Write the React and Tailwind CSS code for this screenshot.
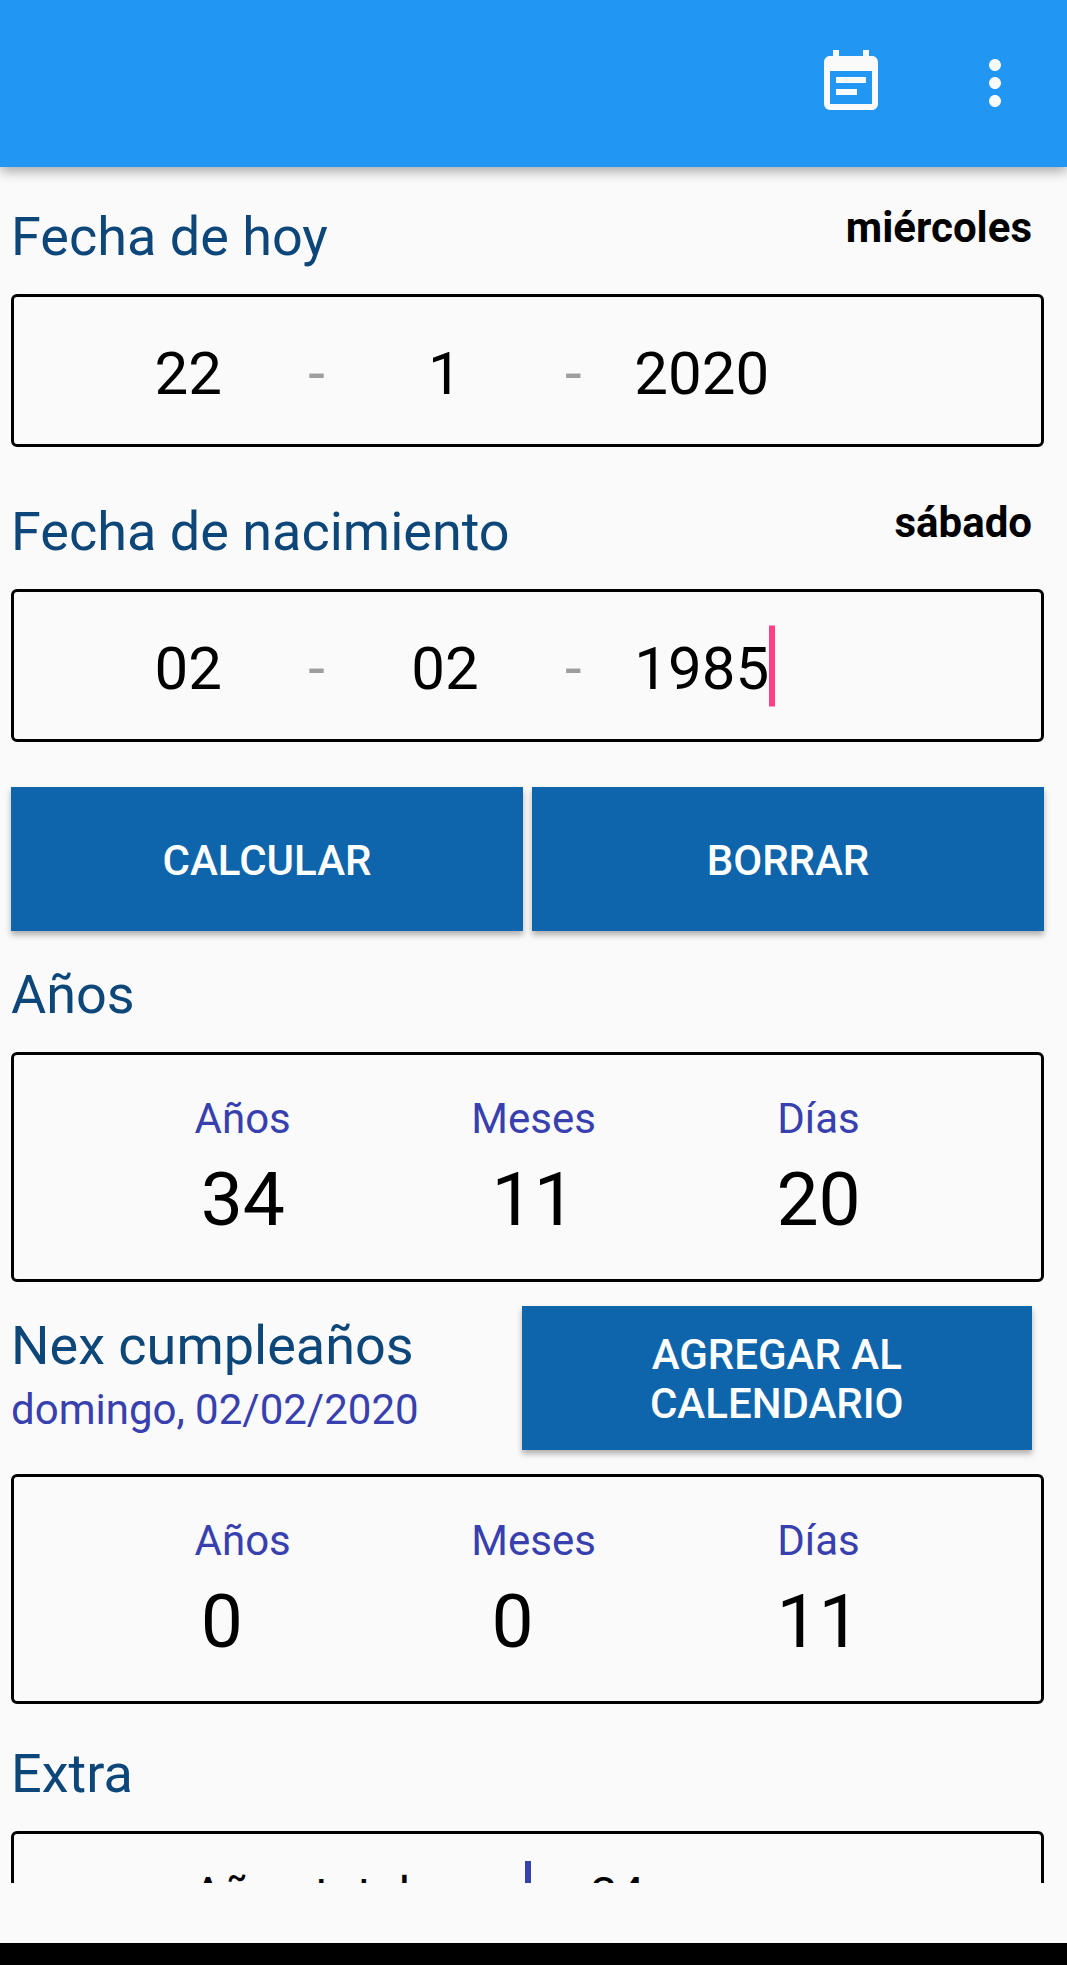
import { MdEventNote, MdMoreVert } from 'react-icons/md'

const age = [
  { label: 'Años', value: '34' },
  { label: 'Meses', value: '11' },
  { label: 'Días', value: '20' },
]

const nextBirthday = [
  { label: 'Años', value: '0' },
  { label: 'Meses', value: '0' },
  { label: 'Días', value: '11' },
]

function TopBar() {
  return (
    <header className="relative z-10 flex shrink-0 justify-end gap-[72px] bg-[#2196f3] pt-[47px] pr-9 pb-12 text-[#fafafa] shadow-[0_4px_12px_rgba(0,0,0,0.35)]">
      <button type="button" aria-label="Eventos">
        <MdEventNote className="size-[72px]" />
      </button>
      <button type="button" aria-label="Más opciones">
        <MdMoreVert className="size-[72px]" />
      </button>
    </header>
  )
}

function DateInput({ id, label, value }) {
  return (
    <input
      id={id}
      aria-label={label}
      defaultValue={value}
      inputMode="numeric"
      className="h-full w-full min-w-0 bg-transparent pt-1.5 text-center text-[60px] text-black outline-none"
    />
  )
}

function Dash() {
  return <span className="pt-1.5 text-center text-[60px] leading-[70px] text-[#9e9e9e]">-</span>
}

function DateField({ id, title, weekday, day, month, year, active }) {
  return (
    <section>
      <div className="mb-6 flex items-start justify-between pr-3">
        <label htmlFor={id} className="text-[54px] leading-[67px] text-[#0d4779]">
          {title}
        </label>
        <span className="text-[42px] leading-[49px] font-bold text-black">{weekday}</span>
      </div>
      <div className="grid h-[153px] grid-cols-[9fr_20fr_8fr_20fr_8fr_20fr_27fr] items-center rounded-md border-3 border-black">
        <span />
        <DateInput id={id} value={day} />
        <Dash />
        <DateInput label={`${title}, mes`} value={month} />
        <Dash />
        <div className="relative h-full">
          <DateInput label={`${title}, año`} value={year} />
          {active && (
            <span className="absolute top-1/2 left-1/2 ml-[67px] h-[81px] w-1.5 -translate-y-1/2 bg-[#ff4081]" />
          )}
        </div>
      </div>
    </section>
  )
}

function ActionButton({ className, children }) {
  return (
    <button
      type="button"
      className={`h-36 bg-[#0e65ac] pt-0.5 text-[42px] leading-[49px] font-medium text-white uppercase shadow-[0_4px_6px_rgba(0,0,0,0.3)] ${className}`}
    >
      {children}
    </button>
  )
}

function ResultBox({ items }) {
  return (
    <dl className="flex justify-evenly rounded-md border-3 border-black pt-[39px] pb-9">
      {items.map((item) => (
        <div key={item.label} className="flex flex-col items-center gap-3">
          <dt className="text-[42px] leading-[49px] text-[#3740ae]">{item.label}</dt>
          <dd className="w-[84px] text-[75px] leading-[88px] text-black">{item.value}</dd>
        </div>
      ))}
    </dl>
  )
}

function App() {
  return (
    <div className="flex h-screen flex-col bg-[#fafafa] font-[Roboto,sans-serif]">
      <TopBar />

      <main className="min-h-0 flex-1 overflow-hidden pt-9 pr-[23px] pl-[11px]">
        <DateField id="hoy" title="Fecha de hoy" weekday="miércoles" day="22" month="1" year="2020" />
        <div className="mt-[51px]">
          <DateField
            id="nacimiento"
            title="Fecha de nacimiento"
            weekday="sábado"
            day="02"
            month="02"
            year="1985"
            active
          />
        </div>

        <div className="mt-[45px] flex gap-[9px]">
          <ActionButton className="flex-1">Calcular</ActionButton>
          <ActionButton className="flex-1">Borrar</ActionButton>
        </div>

        <h2 className="mt-[30px] mb-6 text-[54px] leading-[67px] text-[#0d4779]">Años</h2>
        <ResultBox items={age} />

        <div className="my-6 flex justify-between pr-3">
          <div className="flex flex-col gap-1.5 pt-1.5">
            <h2 className="text-[54px] leading-[67px] text-[#0d4779]">Nex cumpleaños</h2>
            <p className="text-[42px] leading-[49px] text-[#3740ae]">domingo, 02/02/2020</p>
          </div>
          <ActionButton className="w-1/2 px-24">Agregar al calendario</ActionButton>
        </div>
        <ResultBox items={nextBirthday} />

        <h2 className="mt-9 mb-6 text-[54px] leading-[67px] text-[#0d4779]">Extra</h2>
        <div className="grid grid-cols-[1fr_6px_1fr] rounded-md border-3 border-black py-[27px] text-[48px] leading-[56px] text-black">
          <div className="py-1.5 pr-16 text-right">Años totales</div>
          <div className="bg-[#3740ae]" />
          <div className="py-1.5 pl-[60px]">34</div>
        </div>
      </main>

      {/* room for the ad banner, then the system bar */}
      <div className="h-[60px] shrink-0" />
      <div className="h-[22px] shrink-0 bg-black" />
    </div>
  )
}

export default App
